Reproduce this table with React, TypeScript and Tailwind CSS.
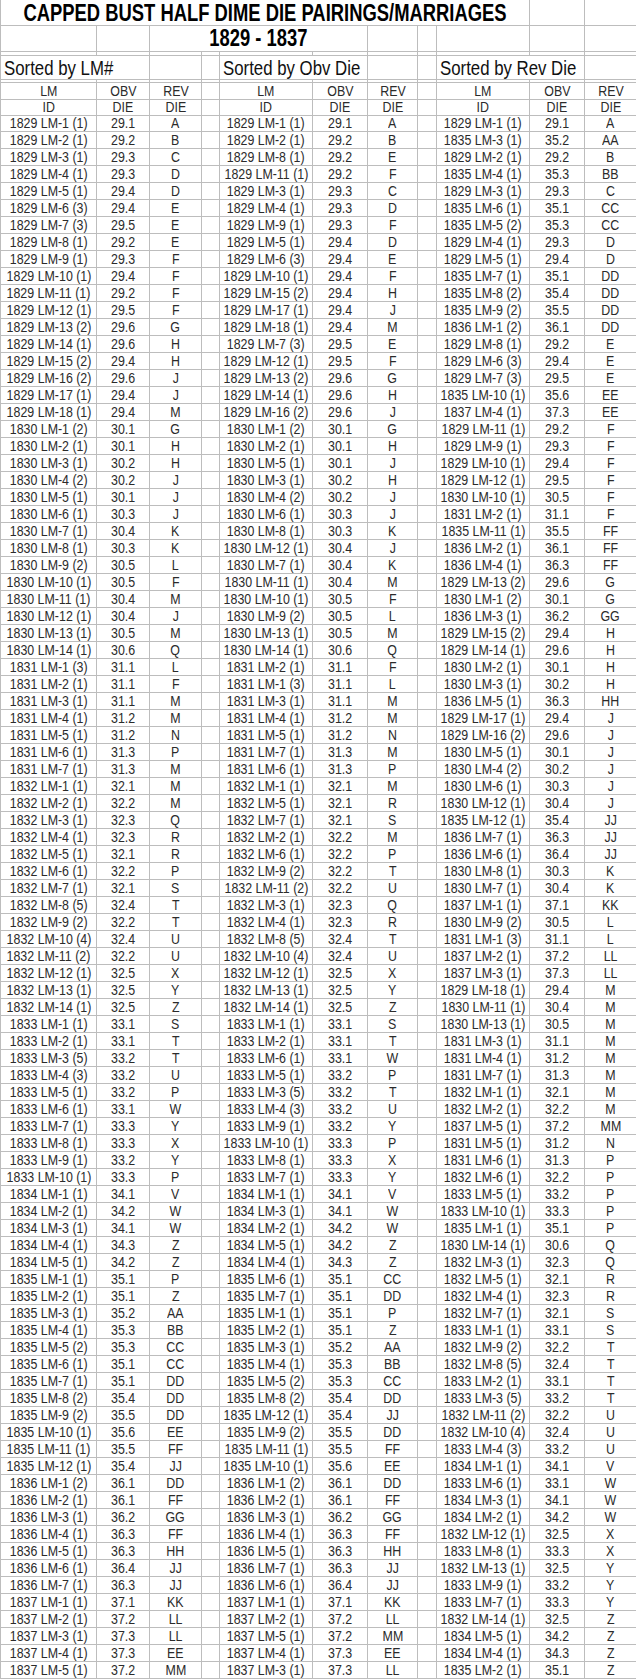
import clsx from "clsx";
import type { ReactNode } from "react";

type Marriage = { id: string; obv: string; rev: string };

// order as listed by LM number
const raw = `1829 LM-1 (1)|29.1|A
1829 LM-2 (1)|29.2|B
1829 LM-3 (1)|29.3|C
1829 LM-4 (1)|29.3|D
1829 LM-5 (1)|29.4|D
1829 LM-6 (3)|29.4|E
1829 LM-7 (3)|29.5|E
1829 LM-8 (1)|29.2|E
1829 LM-9 (1)|29.3|F
1829 LM-10 (1)|29.4|F
1829 LM-11 (1)|29.2|F
1829 LM-12 (1)|29.5|F
1829 LM-13 (2)|29.6|G
1829 LM-14 (1)|29.6|H
1829 LM-15 (2)|29.4|H
1829 LM-16 (2)|29.6|J
1829 LM-17 (1)|29.4|J
1829 LM-18 (1)|29.4|M
1830 LM-1 (2)|30.1|G
1830 LM-2 (1)|30.1|H
1830 LM-3 (1)|30.2|H
1830 LM-4 (2)|30.2|J
1830 LM-5 (1)|30.1|J
1830 LM-6 (1)|30.3|J
1830 LM-7 (1)|30.4|K
1830 LM-8 (1)|30.3|K
1830 LM-9 (2)|30.5|L
1830 LM-10 (1)|30.5|F
1830 LM-11 (1)|30.4|M
1830 LM-12 (1)|30.4|J
1830 LM-13 (1)|30.5|M
1830 LM-14 (1)|30.6|Q
1831 LM-1 (3)|31.1|L
1831 LM-2 (1)|31.1|F
1831 LM-3 (1)|31.1|M
1831 LM-4 (1)|31.2|M
1831 LM-5 (1)|31.2|N
1831 LM-6 (1)|31.3|P
1831 LM-7 (1)|31.3|M
1832 LM-1 (1)|32.1|M
1832 LM-2 (1)|32.2|M
1832 LM-3 (1)|32.3|Q
1832 LM-4 (1)|32.3|R
1832 LM-5 (1)|32.1|R
1832 LM-6 (1)|32.2|P
1832 LM-7 (1)|32.1|S
1832 LM-8 (5)|32.4|T
1832 LM-9 (2)|32.2|T
1832 LM-10 (4)|32.4|U
1832 LM-11 (2)|32.2|U
1832 LM-12 (1)|32.5|X
1832 LM-13 (1)|32.5|Y
1832 LM-14 (1)|32.5|Z
1833 LM-1 (1)|33.1|S
1833 LM-2 (1)|33.1|T
1833 LM-3 (5)|33.2|T
1833 LM-4 (3)|33.2|U
1833 LM-5 (1)|33.2|P
1833 LM-6 (1)|33.1|W
1833 LM-7 (1)|33.3|Y
1833 LM-8 (1)|33.3|X
1833 LM-9 (1)|33.2|Y
1833 LM-10 (1)|33.3|P
1834 LM-1 (1)|34.1|V
1834 LM-2 (1)|34.2|W
1834 LM-3 (1)|34.1|W
1834 LM-4 (1)|34.3|Z
1834 LM-5 (1)|34.2|Z
1835 LM-1 (1)|35.1|P
1835 LM-2 (1)|35.1|Z
1835 LM-3 (1)|35.2|AA
1835 LM-4 (1)|35.3|BB
1835 LM-5 (2)|35.3|CC
1835 LM-6 (1)|35.1|CC
1835 LM-7 (1)|35.1|DD
1835 LM-8 (2)|35.4|DD
1835 LM-9 (2)|35.5|DD
1835 LM-10 (1)|35.6|EE
1835 LM-11 (1)|35.5|FF
1835 LM-12 (1)|35.4|JJ
1836 LM-1 (2)|36.1|DD
1836 LM-2 (1)|36.1|FF
1836 LM-3 (1)|36.2|GG
1836 LM-4 (1)|36.3|FF
1836 LM-5 (1)|36.3|HH
1836 LM-6 (1)|36.4|JJ
1836 LM-7 (1)|36.3|JJ
1837 LM-1 (1)|37.1|KK
1837 LM-2 (1)|37.2|LL
1837 LM-3 (1)|37.3|LL
1837 LM-4 (1)|37.3|EE
1837 LM-5 (1)|37.2|MM`;

const byLm: Marriage[] = raw.split("\n").map((line) => {
  const [id, obv, rev] = line.split("|");
  return { id, obv, rev };
});

const cmp = (a: string, b: string) => (a < b ? -1 : a > b ? 1 : 0);

const byObv = [...byLm].sort((a, b) => cmp(a.obv, b.obv) || cmp(a.rev, b.rev));
const byRev = [...byLm].sort((a, b) => cmp(a.rev, b.rev) || cmp(a.obv, b.obv));

const COLS =
  "grid grid-cols-[96px_53px_52px_18px_93px_55px_50px_19px_93px_55px_52px]";

function Cell({
  children,
  className,
  left,
}: {
  children?: ReactNode;
  className?: string;
  left?: boolean;
}) {
  return (
    <div
      className={clsx(
        "flex items-center overflow-visible whitespace-nowrap border-r border-b border-[#bdbdbd]",
        left ? "justify-start pl-[3px]" : "justify-center",
        className
      )}
    >
      {children !== undefined ? (
        <span
          className={clsx(
            "inline-block scale-x-[0.8]",
            left ? "origin-left" : "origin-center"
          )}
        >
          {children}
        </span>
      ) : null}
    </div>
  );
}

function Row({ h, children }: { h: string; children: ReactNode }) {
  return <div className={clsx(COLS, h)}>{children}</div>;
}

const blanks = (n: number) =>
  Array.from({ length: n }, (_, i) => <Cell key={`b${i}`} />);

export default function App() {
  const rows = byLm.map((_, i) => [byLm[i], byObv[i], byRev[i]]);

  return (
    <div
      className="w-[636px] bg-white text-[#2b2b2b] leading-none"
      style={{ fontFamily: '"Liberation Sans", Arial, sans-serif' }}
    >
      <div className="border-l border-[#bdbdbd]">
        {/* title */}
        <Row h="h-[25px]">
          <Cell className="col-span-9 pt-[2px] text-[23px] font-bold text-black">
            CAPPED BUST HALF DIME DIE PAIRINGS/MARRIAGES
          </Cell>
          {blanks(2)}
        </Row>
        <Row h="h-[27px]">
          {blanks(2)}
          <Cell className="col-span-4 text-[23px] font-bold text-black">
            1829 - 1837
          </Cell>
          {blanks(5)}
        </Row>
        <Row h="h-[4px]">{blanks(11)}</Row>
        <Row h="h-[24px]">
          <Cell left className="col-span-2 text-[21px] text-[#111]">
            Sorted by LM#
          </Cell>
          {blanks(2)}
          <Cell left className="col-span-2 text-[21px] text-[#111]">
            Sorted by Obv Die
          </Cell>
          {blanks(2)}
          <Cell left className="col-span-2 text-[21px] text-[#111]">
            Sorted by Rev Die
          </Cell>
          <Cell />
        </Row>
        <Row h="h-[3px]">{blanks(11)}</Row>

        <div className="text-[15.5px]">
          <Row h="h-[16px]">
            <Cell>LM</Cell>
            <Cell>OBV</Cell>
            <Cell>REV</Cell>
            <Cell />
            <Cell>LM</Cell>
            <Cell>OBV</Cell>
            <Cell>REV</Cell>
            <Cell />
            <Cell>LM</Cell>
            <Cell>OBV</Cell>
            <Cell>REV</Cell>
          </Row>
          <Row h="h-[16px]">
            <Cell>ID</Cell>
            <Cell>DIE</Cell>
            <Cell>DIE</Cell>
            <Cell />
            <Cell>ID</Cell>
            <Cell>DIE</Cell>
            <Cell>DIE</Cell>
            <Cell />
            <Cell>ID</Cell>
            <Cell>DIE</Cell>
            <Cell>DIE</Cell>
          </Row>

          {rows.map(([a, b, c], i) => (
            <Row key={i} h="h-[17px]">
              <Cell>{a.id}</Cell>
              <Cell>{a.obv}</Cell>
              <Cell>{a.rev}</Cell>
              <Cell />
              <Cell>{b.id}</Cell>
              <Cell>{b.obv}</Cell>
              <Cell>{b.rev}</Cell>
              <Cell />
              <Cell>{c.id}</Cell>
              <Cell>{c.obv}</Cell>
              <Cell>{c.rev}</Cell>
            </Row>
          ))}
        </div>
      </div>
    </div>
  );
}
